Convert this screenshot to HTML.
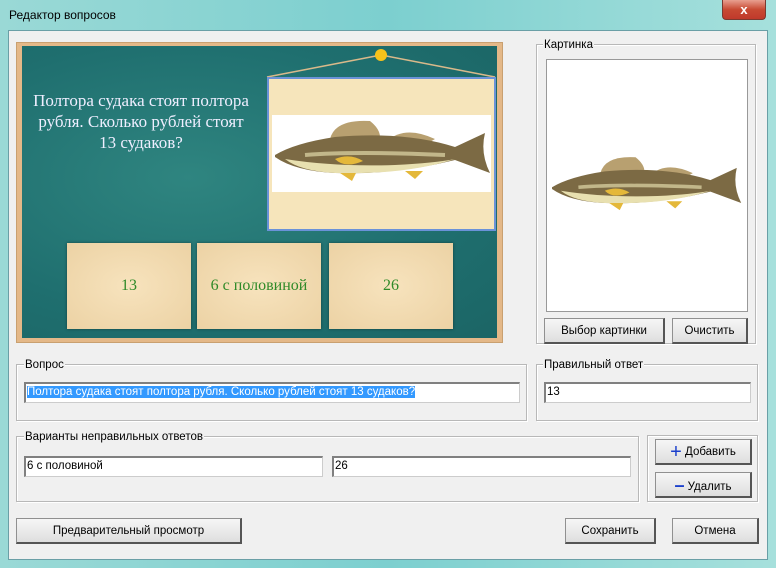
<!DOCTYPE html>
<html><head><meta charset="utf-8"><style>
*{box-sizing:border-box;margin:0;padding:0}
body{width:776px;height:568px;overflow:hidden;background:linear-gradient(90deg,#9ad9d6,#7ccfcf 50%,#a6e0dc);font-family:"Liberation Sans",sans-serif;font-size:11.5px;color:#000;position:relative}
.a{position:absolute}
.client{left:8px;top:30px;width:760px;height:530px;background:#f0f0f0;border:1px solid #6a9fa6}
.grp{position:absolute;border:1px solid #b8b8b8;box-shadow:inset 1px 1px 0 #fff,1px 1px 0 #fff}
.lbl{position:absolute;background:#f0f0f0;padding:0 1px;line-height:12px}
.inp{position:absolute;background:#fff;border:1px solid #ccc;border-top:2px solid #808080;border-left:2px solid #808080;line-height:17px;padding-left:1px;white-space:nowrap;overflow:hidden}
.btn{position:absolute;background:linear-gradient(#f6f6f6,#dedede);border:1px solid #909090;border-right:2px solid #555;border-bottom:2px solid #555;text-align:center;line-height:24px}
.card{position:absolute;top:243px;height:86px;width:124px;background:radial-gradient(#f7e3bd,#ecd2a4);box-shadow:0 0 3px rgba(0,0,0,.4);font-family:"Liberation Serif",serif;font-size:16px;color:#2f8a28;text-align:center;line-height:86px}
</style></head><body>
<div class="a" style="left:9px;top:8px;font-size:12px">Редактор вопросов</div>
<div class="a" style="left:722px;top:0;width:44px;height:20px;background:linear-gradient(#e8a090,#c84a33 50%,#c0392b);border:1px solid #7a3a30;border-top:none;border-radius:0 0 4px 4px;color:#fff;font-weight:bold;text-align:center;line-height:19px;font-size:13px">x</div>
<div class="a client"></div>

<div class="a" style="left:16px;top:42px;width:487px;height:301px;background:#e4b888;border:1px solid #c9a070"></div>
<div class="a" style="left:22px;top:46px;width:475px;height:292px;background:radial-gradient(ellipse at 35% 45%,#2f8580,#1f6f6f 60%,#1b6565)"></div>
<svg class="a" style="left:0;top:0" width="776" height="568">
<line x1="267" y1="77" x2="381" y2="55" stroke="#d9b98a" stroke-width="1.5"/>
<line x1="381" y1="55" x2="495" y2="77" stroke="#d9b98a" stroke-width="1.5"/>
<circle cx="381" cy="55" r="6" fill="#f7c21a"/>
</svg>
<div class="a" style="left:267px;top:77px;width:229px;height:154px;background:#f6e5bb;border:2px solid #6a92d8"></div>
<div class="a" style="left:272px;top:115px;width:219px;height:77px;background:#fff"></div>
<div class="a" style="left:25px;top:90px;width:232px;text-align:center;font-family:'Liberation Serif',serif;font-size:17px;line-height:21px;color:#eef">Полтора судака стоят полтора рубля. Сколько рублей стоят 13&nbsp;судаков?</div>
<div class="card" style="left:67px">13</div>
<div class="card" style="left:197px">6 с половиной</div>
<div class="card" style="left:329px">26</div>

<svg width="0" height="0" style="position:absolute"><defs>
<g id="fish">
<path d="M55 24 Q60 4 95 6 Q105 14 105 22Z" fill="#b8a070"/>
<path d="M112 26 Q130 10 160 24 L150 30Z" fill="#b8a070"/>
<path d="M0 40 Q20 28 60 22 Q130 16 180 32 L210 18 Q205 38 215 58 L180 45 Q120 60 60 58 Q20 56 0 42Z" fill="#7c6a44"/>
<path d="M10 44 Q60 52 120 50 Q160 48 180 44 Q130 60 60 58 Q25 56 10 44Z" fill="#e8e0b0"/>
<path d="M30 40 Q80 36 170 40" stroke="#e0d8a8" stroke-width="4" fill="none" opacity=".7"/>
<path d="M60 44 Q75 38 88 46 Q70 54 60 44Z" fill="#e4b83a"/>
<path d="M65 58 l12 8 l4-8Z M130 56 l10 8 l8-8Z" fill="#e4b83a"/>
</g></defs></svg>
<svg class="a" style="left:275px;top:115px" width="215" height="75"><use href="#fish"/></svg>

<div class="grp" style="left:536px;top:44px;width:220px;height:300px"></div>
<div class="lbl" style="left:543px;top:39px">Картинка</div>
<div class="a" style="left:546px;top:59px;width:202px;height:253px;background:#fff;border:1px solid #999"></div>
<svg class="a" style="left:552px;top:152px" width="190" height="70"><g transform="scale(0.88)"><use href="#fish"/></g></svg>
<div class="btn" style="left:544px;top:318px;width:121px;height:26px">Выбор картинки</div>
<div class="btn" style="left:672px;top:318px;width:76px;height:26px">Очистить</div>

<div class="grp" style="left:16px;top:364px;width:511px;height:57px"></div>
<div class="lbl" style="left:24px;top:359px">Вопрос</div>
<div class="inp" style="left:24px;top:382px;width:496px;height:21px"><span style="background:#3399ff;color:#fff">Полтора судака стоят полтора рубля. Сколько рублей стоят 13 судаков?</span></div>
<div class="grp" style="left:536px;top:364px;width:222px;height:57px"></div>
<div class="lbl" style="left:543px;top:359px">Правильный ответ</div>
<div class="inp" style="left:544px;top:382px;width:207px;height:21px">13</div>

<div class="grp" style="left:16px;top:436px;width:623px;height:66px"></div>
<div class="lbl" style="left:24px;top:431px">Варианты неправильных ответов</div>
<div class="inp" style="left:24px;top:456px;width:299px;height:21px">6 с половиной</div>
<div class="inp" style="left:332px;top:456px;width:299px;height:21px">26</div>
<div class="grp" style="left:647px;top:435px;width:111px;height:67px"></div>
<div class="btn" style="left:655px;top:439px;width:97px;height:26px"><span style="color:#1a3fcc;font-size:20px;vertical-align:-3px">+</span> Добавить</div>
<div class="btn" style="left:655px;top:472px;width:97px;height:26px"><span style="color:#1a3fcc;font-size:18px;font-weight:bold;vertical-align:-1px">–</span> Удалить</div>

<div class="btn" style="left:16px;top:518px;width:226px;height:26px">Предварительный просмотр</div>
<div class="btn" style="left:565px;top:518px;width:91px;height:26px">Сохранить</div>
<div class="btn" style="left:672px;top:518px;width:87px;height:26px">Отмена</div>
</body></html>
